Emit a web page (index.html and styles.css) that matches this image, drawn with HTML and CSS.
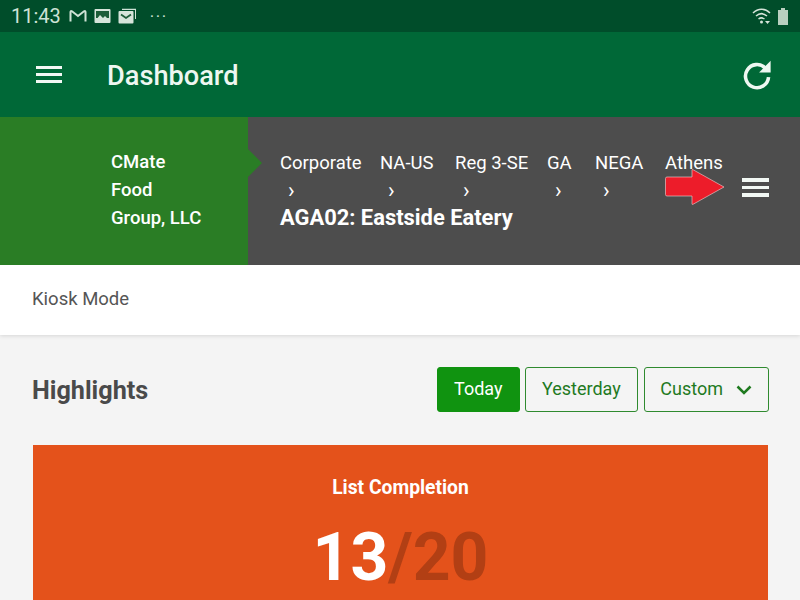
FILE: index.html
```html
<!DOCTYPE html>
<html lang="en">
<head>
    <meta charset="UTF-8">
    <meta name="viewport" content="width=device-width, initial-scale=1.0">
    <title>Dashboard</title>
    <link rel="stylesheet" href="styles.css">
</head>
<body>
    <div class="status-bar">
        <div class="status-left">
            <span class="status-time">11:43</span>
            <svg class="status-icon" width="18" height="14" viewBox="0 0 18 14"><path d="M1.500 12.500V3q0-1.500 1.500-.7L9 7l6-4.700q1.500-.8 1.500.7v9.500" fill="none" stroke="#cfe3d6" stroke-width="2"/></svg>
            <svg class="status-icon" width="17" height="14" viewBox="0 0 17 14"><rect x="0.500" y="0" width="16" height="14" rx="1" fill="#d6e4da"/><rect x="2" y="2" width="13" height="7" fill="#1d5c38"/><path d="M2 11l4-5 3 3 2-2 4 4z" fill="#d6e4da"/></svg>
            <svg class="status-icon" width="19" height="16" viewBox="0 0 19 16"><path d="M4 2V0.800h14V11h-1V2z" fill="#cfe3d6"/><rect x="0.500" y="3" width="15" height="12.500" rx="1" fill="#d6e4da"/><path d="M3 6.500l5 3.500 5-3.500" fill="none" stroke="#1d5c38" stroke-width="1.800"/></svg>
            <span class="status-more">···</span>
        </div>
        <div class="status-right">
            <svg width="20" height="18" viewBox="0 0 20 18"><g fill="none" stroke="#d6e4da" stroke-width="1.500"><path d="M1 6c5-5 12-5 17 0"/><path d="M4 9c3.500-3 7.500-3 11 0"/><path d="M6.500 12c2-1.500 4-1.500 6 0"/></g><circle cx="9.500" cy="15" r="1.500" fill="#d6e4da"/><path d="M13 14h5l-2.500 3z" fill="#d6e4da"/></svg>
            <svg width="12" height="18" viewBox="0 0 12 18"><path d="M4 1h4v2h3v15H1V3h3z" fill="#b9cfc0"/></svg>
        </div>
    </div>

    <header class="app-bar">
        <div class="menu-icon"><span></span><span></span><span></span></div>
        <h1 class="app-title">Dashboard</h1>
        <svg class="refresh" width="30" height="30" viewBox="0 0 30 30">
            <path d="M23 8.500A11 11 0 1 0 26 17" fill="none" stroke="#eef7f1" stroke-width="3.400"/>
            <path d="M17 12.500h11V1.500z" fill="#eef7f1"/>
        </svg>
    </header>

    <section class="org-bar">
        <div class="org-name">CMate<br>Food<br>Group, LLC</div>
        <div class="org-path">
            <ul class="crumbs">
                <li>Corporate<span class="sep">›</span></li>
                <li>NA-US<span class="sep">›</span></li>
                <li>Reg 3-SE<span class="sep">›</span></li>
                <li>GA<span class="sep">›</span></li>
                <li>NEGA<span class="sep">›</span></li>
                <li>Athens</li>
            </ul>
            <div class="location">AGA02: Eastside Eatery</div>
        </div>
        <svg class="arrow" width="60" height="36" viewBox="0 0 60 36">
            <path d="M2 8h25V1q0-.8 1-.3L59 18 28 35.300q-1 .5-1-.3v-8H2q-1.500 0-1.500-1.500V9.500Q.5 8 2 8z" fill="#ed1c2a" stroke="#f4d5d5" stroke-width="0.600"/>
        </svg>
        <div class="menu-icon org-menu"><span></span><span></span><span></span></div>
    </section>

    <nav class="kiosk-row">Kiosk Mode</nav>

    <main class="content">
        <div class="highlights-head">
            <h2>Highlights</h2>
            <div class="range-buttons">
                <button class="range active">Today</button>
                <button class="range yesterday">Yesterday</button>
                <button class="range custom"><span class="range-label">Custom</span>
                    <svg class="chevron" width="16" height="10" viewBox="0 0 16 10"><path d="M1.500 1.500L8 8l6.500-6.500" fill="none" stroke="#1f7a1f" stroke-width="2.500"/></svg>
                </button>
            </div>
        </div>
        <div class="card-orange">
            <div class="card-title">List Completion</div>
            <div class="card-number">13<span class="dim">/20</span></div>
        </div>
    </main>
</body>
</html>
```

FILE: styles.css
```css
body {
    margin: 0;
    height: 600px;
    overflow: hidden;
    background: #f4f4f4;
    font-family: Roboto, "Liberation Sans", sans-serif;
    color: #484848;
}

.status-bar {
    height: 32px;
    background: #004d2a;
    display: flex;
    align-items: center;
    justify-content: space-between;
    padding: 0 11px;
    color: #cfe3d6;
}

.status-left {
    display: flex;
    align-items: center;
    gap: 7px;
}

.status-right {
    display: flex;
    align-items: center;
    gap: 5px;
}

.status-time {
    font-size: 20px;
    margin-right: 1px;
}

.status-more {
    margin-left: 6px;
    font-size: 17px;
    letter-spacing: 1.500px;
}

.app-bar {
    height: 85px;
    background: #006837;
    display: flex;
    align-items: center;
    padding: 0 28px 0 36px;
    color: #eef7f1;
}

.menu-icon {
    width: 26px;
    display: flex;
    flex-direction: column;
    gap: 4px;
}

.menu-icon span {
    height: 3px;
    background: #f2f8f4;
}

.app-title {
    margin: 2px 0 0 45px;
    flex: 1;
    font-size: 27.200px;
    font-weight: 500;
}

.refresh {
    transform: scale(1.050);
}

.org-bar {
    position: relative;
    height: 148px;
    background: #4d4d4d;
    display: flex;
    color: #fff;
}

.org-name {
    position: relative;
    width: 137px;
    padding-top: 31px;
    padding-left: 111px;
    background: #2a7d25;
    font-size: 18.500px;
    font-weight: 500;
    line-height: 28px;
}

.org-name::after {
    content: "";
    position: absolute;
    top: 32px;
    right: -14px;
    border-left: 14px solid #2a7d25;
    border-top: 14px solid transparent;
    border-bottom: 14px solid transparent;
}

.org-path {
    padding: 32px 0 0 32px;
}

.crumbs {
    list-style: none;
    margin: 0;
    padding: 0;
    display: grid;
    grid-template-columns: 100px 75px 92px 48px 70px auto;
    font-size: 18.500px;
    line-height: 28px;
}

.sep {
    display: block;
    padding-left: 8px;
    font-size: 22px;
}

.location {
    margin-top: -1px;
    font-size: 21.900px;
    font-weight: 700;
    line-height: 28px;
}

.arrow {
    position: absolute;
    left: 665px;
    top: 52px;
}

.org-menu {
    position: absolute;
    left: 742px;
    top: 61px;
    width: 27px;
    gap: 4px;
}

.org-menu span {
    height: 3.500px;
}

.kiosk-row {
    height: 70px;
    background: #fff;
    box-sizing: border-box;
    padding-top: 23px;
    padding-left: 32px;
    font-size: 18.500px;
    color: #555;
    box-shadow: 0 1px 4px rgba(0,0,0,0.12);
}

.content {
    padding: 32px 31px 0 32px;
}

.highlights-head {
    display: flex;
    align-items: center;
    justify-content: space-between;
    height: 45px;
}

h2 {
    margin: 1px 0 0;
    font-size: 25.200px;
    font-weight: 700;
    color: #4a4a4a;
}

.range-buttons {
    display: flex;
    gap: 5px;
}

.range {
    height: 45px;
    padding: 0 16px 2px;
    background: transparent;
    border: 1px solid #2f8a2f;
    border-radius: 3px;
    color: #1f7a1f;
    font-family: inherit;
    font-size: 18px;
    display: flex;
    align-items: center;
}

.range.active {
    background: #109310;
    border-color: #109310;
    color: #fff;
}

.range.yesterday {
    margin-right: 1px;
    padding: 0 16.500px 2px;
}

.range.custom {
    padding: 0 16px 0 15px;
}

.range-label {
    padding-bottom: 2px;
}

.chevron {
    margin-left: 13px;
}

.card-orange {
    margin: 33px 1px 0;
    height: 155px;
    overflow: hidden;
    background: #e4521b;
    text-align: center;
    color: #fff;
    padding-top: 31px;
    box-sizing: border-box;
}

.card-title {
    font-size: 19.300px;
    font-weight: 700;
}

.card-number {
    margin-top: 21px;
    font-size: 66px;
    font-weight: 700;
    line-height: 75px;
}

.dim {
    color: #b23f14;
}
```
